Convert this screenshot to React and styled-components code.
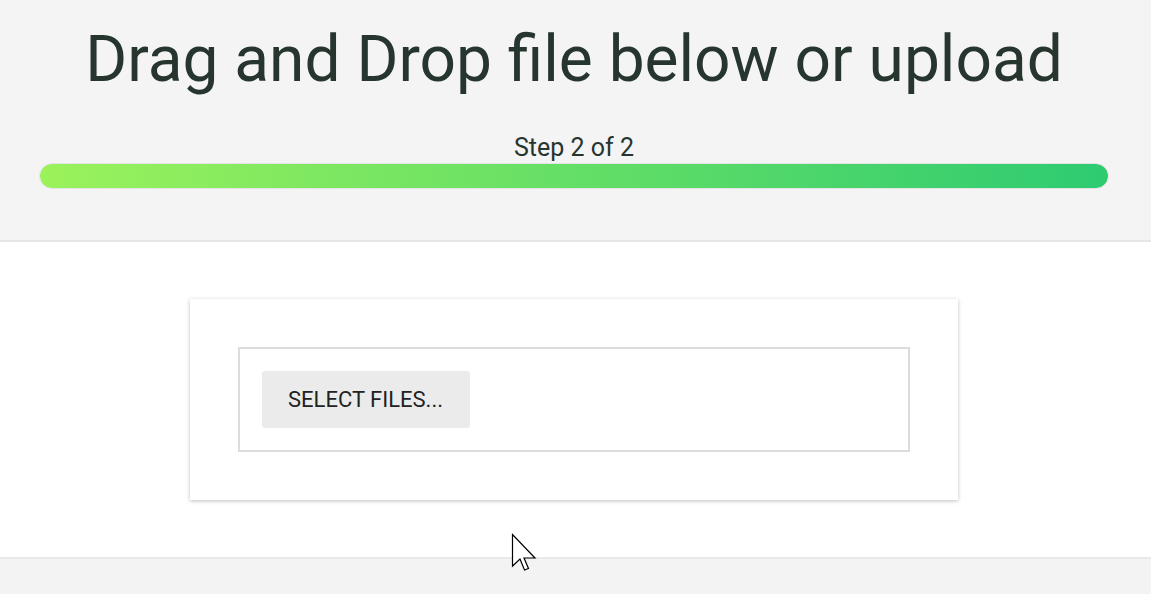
import styled, { createGlobalStyle } from "styled-components";

const GlobalStyle = createGlobalStyle`
  html, body {
    margin: 0;
    padding: 0;
    background: #f4f4f4;
    font-family: Roboto, "Liberation Sans", sans-serif;
  }
`;

// header
const Header = styled.header`
  background: #f4f4f4;
  padding: 22px 42px 0 39px;
  height: 218px;
  border-bottom: 2px solid #e6e6e6;
`;

const Title = styled.h1`
  margin: 0;
  text-align: center;
  font-weight: 400;
  font-size: 64px;
  line-height: 76px;
  color: #27352f;
`;

const StepLabel = styled.div`
  margin-top: 35px;
  text-align: center;
  font-size: 25px;
  line-height: 30px;
  color: #27352f;
`;

const Track = styled.div`
  height: 24px;
  border: 1px solid #e4e4e4;
  border-radius: 13px;
  background: #ececec;
  overflow: hidden;
`;

const Fill = styled.div`
  height: 100%;
  border-radius: 12px;
  background: linear-gradient(90deg, #9bf25b 0%, #2ecb71 100%);
`;

// zona de upload
const Main = styled.main`
  background: #fff;
  padding: 57px 4px 57px 0;
  border-bottom: 2px solid #e9e9e9;
  display: flex;
  justify-content: center;
  position: relative;
`;

const Card = styled.div`
  width: 768px;
  box-sizing: border-box;
  padding: 48px;
  background: #fff;
  box-shadow: 0 1px 4px rgba(0, 0, 0, 0.25);
`;

const DropZone = styled.div`
  border: 2px solid #dcdcdc;
  padding: 22px;
  display: flex;
`;

const SelectButton = styled.button`
  width: 208px;
  height: 57px;
  border: none;
  border-radius: 3px;
  background: #ebebeb;
  font-family: Roboto, "Liberation Sans", sans-serif;
  font-size: 22px;
  color: #222;
  cursor: pointer;
`;

const Cursor = styled.svg`
  position: absolute;
  left: 511px;
  top: 291px;
  z-index: 2;
`;

const Footer = styled.div`
  background: #f3f3f3;
  height: 60px;
`;

const App = () => {
  return (
    <>
      <GlobalStyle />
      <Header>
        <Title>Drag and Drop file below or upload</Title>
        <StepLabel>Step 2 of 2</StepLabel>
        <Track>
          <Fill style={{ width: "100%" }} />
        </Track>
      </Header>
      <Main>
        <Card>
          <DropZone>
            <SelectButton>SELECT FILES...</SelectButton>
          </DropZone>
        </Card>
        <Cursor width="26" height="40" viewBox="0 0 26 40">
          <path
            d="M1.5 1.5 L1.5 33 L9 26 L13.5 37 L17.5 35.5 L13 25 L24 25 Z"
            fill="#fff"
            stroke="#000"
            strokeWidth="1.2"
            strokeLinejoin="miter"
          />
        </Cursor>
      </Main>
      <Footer />
    </>
  );
};

export default App;
